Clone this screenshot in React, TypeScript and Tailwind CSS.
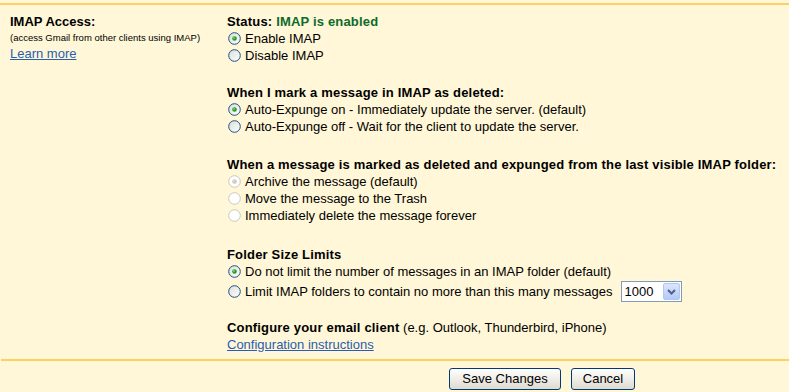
import React from 'react';

type RadioProps = {
  checked?: boolean;
  disabled?: boolean;
};

const Radio: React.FC<RadioProps> = ({ checked, disabled }) => {
  const border = disabled ? '#cac8bb' : '#1c5180';
  return (
    <svg width="13" height="13" viewBox="0 0 13 13" className="shrink-0">
      <defs>
        <linearGradient id={disabled ? 'rgd' : 'rg'} x1="0" y1="0" x2="1" y2="1">
          <stop offset="0" stopColor={disabled ? '#ffffff' : '#dcdcd7'} />
          <stop offset="1" stopColor="#ffffff" />
        </linearGradient>
      </defs>
      <circle cx="6.5" cy="6.5" r="5.8" fill={`url(#${disabled ? 'rgd' : 'rg'})`} stroke={border} strokeWidth="1" />
      {checked && (
        <>
          <circle cx="6.5" cy="6.5" r="2.3" fill={disabled ? '#cac8bb' : '#21a121'} />
          <circle cx="6" cy="6" r="0.9" fill={disabled ? '#e2e0d6' : '#7ed27e'} />
        </>
      )}
    </svg>
  );
};

type OptionProps = {
  label: React.ReactNode;
  checked?: boolean;
  disabled?: boolean;
};

const Option: React.FC<OptionProps> = ({ label, checked, disabled }) => (
  <div className="flex items-center h-[17px] pl-[1px]">
    <Radio checked={checked} disabled={disabled} />
    <span className="ml-[4px]">{label}</span>
  </div>
);

const Heading: React.FC<{ children: React.ReactNode }> = ({ children }) => (
  <div className="h-[17px] font-bold tracking-[0.18px]">{children}</div>
);

export default function App() {
  return (
    <div
      className="w-[789px] h-[392px] bg-[#fff7d7] text-[13px] leading-[17px] text-black overflow-hidden"
      style={{ fontFamily: '"Liberation Sans", Arial, sans-serif' }}
    >
      <div className="pt-[3px]">
        <div className="h-[2px] bg-[#fad163]" />
      </div>

      <div className="flex pt-[8px]">
        <div className="w-[227px] pl-[10px]">
          <div className="font-bold">IMAP Access:</div>
          <div className="text-[9.5px] leading-[14px] pt-[1px]">(access Gmail from other clients using IMAP)</div>
          <a href="#" className="text-[#2a5db0] underline">Learn more</a>
        </div>

        <div className="flex-1">
          <div>
            <Heading>
              Status: <span className="text-[#0b6b2b]">IMAP is enabled</span>
            </Heading>
            <Option checked label="Enable IMAP" />
            <Option label="Disable IMAP" />
          </div>

          <div className="mt-[20px]">
            <Heading>When I mark a message in IMAP as deleted:</Heading>
            <Option checked label="Auto-Expunge on - Immediately update the server. (default)" />
            <Option label="Auto-Expunge off - Wait for the client to update the server." />
          </div>

          <div className="mt-[21px]">
            <Heading>When a message is marked as deleted and expunged from the last visible IMAP folder:</Heading>
            <Option checked disabled label="Archive the message (default)" />
            <Option disabled label="Move the message to the Trash" />
            <Option disabled label="Immediately delete the message forever" />
          </div>

          <div className="mt-[22px]">
            <Heading>Folder Size Limits</Heading>
            <Option checked label="Do not limit the number of messages in an IMAP folder (default)" />
            <div className="flex items-center h-[23px] pl-[1px]">
              <Radio />
              <span className="ml-[4px]">Limit IMAP folders to contain no more than this many messages</span>
              <div className="ml-[8px] flex items-center h-[21px] w-[61px] border border-[#7f9db9] bg-white">
                <span className="flex-1 pl-[3px] text-[13px]">1000</span>
                <div className="w-[17px] h-[17px] mr-[1px] rounded-[2px] border border-[#b3c7f3] bg-gradient-to-b from-[#dce6fd] to-[#b4c9f7] flex items-center justify-center">
                  <svg width="9" height="6" viewBox="0 0 9 6">
                    <path d="M1 1 L4.5 4.5 L8 1" fill="none" stroke="#4d6185" strokeWidth="2" />
                  </svg>
                </div>
              </div>
            </div>
          </div>

          <div className="mt-[16px]">
            <div>
              <span className="font-bold tracking-[0.18px]">Configure your email client</span> (e.g. Outlook, Thunderbird, iPhone)
            </div>
            <a href="#" className="text-[#2a5db0] underline">Configuration instructions</a>
          </div>
        </div>
      </div>

      <div className="mt-[6px] ml-[1px] h-[2px] bg-[#fad163]" />

      <div className="flex pl-[449px] pt-[7px] gap-[10px]">
        <button className="h-[22px] w-[112px] rounded-[3px] border border-[#003c74] bg-gradient-to-b from-white to-[#dedbd0] text-[13px] leading-[18px] text-black">
          Save Changes
        </button>
        <button className="h-[22px] w-[64px] rounded-[3px] border border-[#003c74] bg-gradient-to-b from-white to-[#dedbd0] text-[13px] leading-[18px] text-black">
          Cancel
        </button>
      </div>
    </div>
  );
}
